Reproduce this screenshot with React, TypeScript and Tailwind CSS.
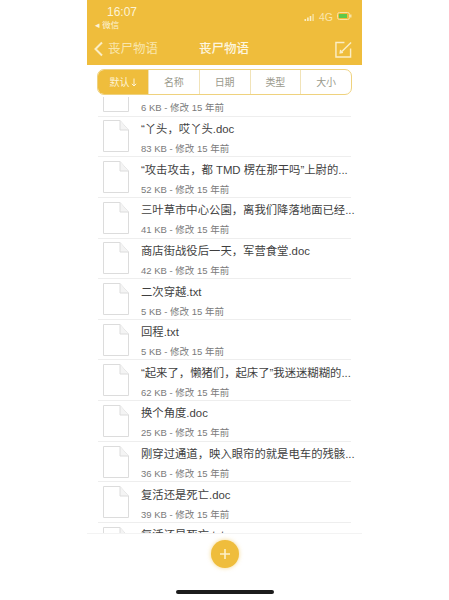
const files = [
  { name: "", meta: "6 KB - 修改 15 年前" },
  { name: "“丫头，哎丫头.doc", meta: "83 KB - 修改 15 年前" },
  { name: "“攻击攻击，都 TMD 楞在那干吗”上尉的...", meta: "52 KB - 修改 15 年前" },
  { name: "三叶草市中心公園，离我们降落地面已经...", meta: "41 KB - 修改 15 年前" },
  { name: "商店街战役后一天，军营食堂.doc", meta: "42 KB - 修改 15 年前" },
  { name: "二次穿越.txt", meta: "5 KB - 修改 15 年前" },
  { name: "回程.txt", meta: "5 KB - 修改 15 年前" },
  { name: "“起来了，懒猪们，起床了”我迷迷糊糊的...", meta: "62 KB - 修改 15 年前" },
  { name: "换个角度.doc", meta: "25 KB - 修改 15 年前" },
  { name: "刚穿过通道，映入眼帘的就是电车的残骸...", meta: "36 KB - 修改 15 年前" },
  { name: "复活还是死亡.doc", meta: "39 KB - 修改 15 年前" },
  { name: "复活还是死亡.txt", meta: "" },
];

const tabs = ["名称", "日期", "类型", "大小"];

function FileIcon() {
  return (
    <svg width="26" height="32" viewBox="0 0 26 32" fill="none" stroke="#dcdcdc" strokeWidth="1" className="shrink-0">
      <path d="M0.5 0.5H17L25.5 10V31.5H0.5Z" fill="#fff" />
      <path d="M17 0.5V10H25.5" fill="#f4f4f4" />
    </svg>
  );
}

export default function App() {
  return (
    <div className="flex h-[600px] w-full justify-center overflow-hidden bg-white font-['Liberation_Sans','Noto_Sans_CJK_SC',sans-serif]">
      <div className="flex w-[275px] flex-col">
        {/* yellow header */}
        <div className="h-[65px] shrink-0 bg-[#efbd3c] text-white">
          <div className="flex h-[36px] justify-between pl-[8px] pr-[10px] pt-[5px]">
            <div className="leading-none">
              <div className="pl-[12px] text-[12px] leading-[14px] text-[#fdf3d6]">16:07</div>
              <div className="mt-[1px] text-[8.5px] leading-[11px] text-[#fdf3d6]">◂ 微信</div>
            </div>
            <div className="flex h-[14px] items-center gap-[4px] pt-[10px]">
              <svg width="11" height="7" viewBox="0 0 10 7" fill="#fbeec6">
                <rect x="0" y="5" width="1.6" height="2" />
                <rect x="2.6" y="3.5" width="1.6" height="3.5" />
                <rect x="5.2" y="2" width="1.6" height="5" />
                <rect x="7.8" y="0" width="1.6" height="7" fill="#f5dd95" />
              </svg>
              <span className="text-[10.5px] leading-none text-[#f9e6ae]">4G</span>
              <svg width="15" height="8" viewBox="0 0 15 8" className="-mt-[3px]">
                <rect x="0.5" y="0.5" width="12" height="7" rx="2" fill="none" stroke="#f7e3a6" />
                <rect x="2" y="2" width="8" height="4" fill="#5ec94a" />
                <rect x="13" y="2.5" width="1.5" height="3" fill="#f7e3a6" />
              </svg>
            </div>
          </div>
          <div className="flex h-[26px] items-center pl-[6px] pr-[10px]">
            <svg width="11" height="16" viewBox="0 0 11 16" fill="none" stroke="#fbeec6" strokeWidth="2" className="shrink-0">
              <path d="M9 1.5L2.5 8L9 14.5" />
            </svg>
            <span className="ml-[4px] text-[12.5px] text-[#f9e6ae]">丧尸物语</span>
            <span className="ml-[41px] text-[12.5px] font-medium text-[#fdf6e0]">丧尸物语</span>
            <svg width="17" height="17" viewBox="0 0 18 18" fill="none" stroke="#fbeec6" strokeWidth="1.5" className="ml-auto">
              <path d="M10 1.5H1V17H16.5V8" />
              <path d="M6.5 12L17 1.5" />
              <path d="M6 9.5L5.5 12.5L8.5 12" />
            </svg>
          </div>
        </div>

        {/* sort tabs */}
        <div className="mx-[10px] mt-[4px] flex h-[26px] shrink-0 overflow-hidden rounded-[7px] border border-[#efd27e] text-[10px] text-[#9a9a8c]">
          <div className="flex w-[50px] items-center justify-center gap-[1px] bg-[#efbd3c] text-[#fdf3d6]">
            默认
            <svg width="6" height="9" viewBox="0 0 6 9" fill="none" stroke="#fdf3d6" strokeWidth="1">
              <path d="M3 0.5V8M0.8 5.8L3 8L5.2 5.8" />
            </svg>
          </div>
          {tabs.map((t) => (
            <div key={t} className="flex flex-1 items-center justify-center border-l border-[#f1e3b8]">
              {t}
            </div>
          ))}
        </div>

        {/* file list */}
        <div className="mt-[2px] h-[436px] shrink-0 overflow-hidden">
          <div className="-mt-[21px]">
            {files.map((f, i) => (
              <div key={i} className="mx-[11px] flex h-[40.65px] items-center gap-[12px] border-b border-[#eeeeee] pl-[5px]">
                <FileIcon />
                <div className="min-w-0 pt-[3px]">
                  <div className="h-[16px] whitespace-nowrap text-[11.35px] leading-[16px] text-[#3f3f3f]">{f.name}</div>
                  <div className="mt-[6px] h-[12px] whitespace-nowrap text-[9.5px] leading-[12px] text-[#7a7a7a]">{f.meta}</div>
                </div>
              </div>
            ))}
          </div>
        </div>

        {/* bottom bar */}
        <div className="flex flex-1 flex-col items-center border-t border-[#f3f3f3]">
          <div className="mt-[6px] flex size-[28px] items-center justify-center rounded-full bg-[#efbd3c] shadow-[0_0_4px_rgba(239,189,60,0.6)]">
            <svg width="12" height="12" viewBox="0 0 12 12" stroke="#fdf0c8" strokeWidth="1.6">
              <path d="M6 1V11M1 6H11" />
            </svg>
          </div>
          <div className="mt-[22px] h-[4px] w-[98px] rounded-full bg-[#1c1c1c]" />
        </div>
      </div>
    </div>
  );
}
